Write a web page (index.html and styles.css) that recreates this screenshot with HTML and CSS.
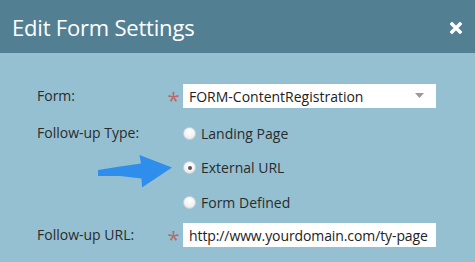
FILE: index.html
```html
<!DOCTYPE html>
<html lang="en">
<head>
    <meta charset="UTF-8">
    <title>Edit Form Settings</title>
    <link rel="stylesheet" href="styles.css">
</head>
<body>
    <div class="dialog">
        <div class="dialog-header">
            <h1>Edit Form Settings</h1>
            <span class="close-btn">
                <svg width="12" height="12" viewBox="0 0 12 12">
                    <path d="M2 2 L10 10 M10 2 L2 10" stroke="#fff" stroke-width="3.4" stroke-linecap="square"/>
                </svg>
            </span>
        </div>

        <div class="dialog-body">
            <div class="form-row">
                <label>Form:</label>
                <span class="required">*</span>
                <div class="select">
                    <span>FORM-ContentRegistration</span>
                    <svg class="caret" width="9" height="5" viewBox="0 0 9 5">
                        <polygon points="0,0 9,0 4.5,5" fill="#9a9a9a"/>
                    </svg>
                </div>
            </div>

            <div class="form-row row-type">
                <label>Follow-up Type:</label>
                <span></span>
                <div class="radio-group">
                    <div class="radio-item"><span class="radio"></span>Landing Page</div>
                    <div class="radio-item"><span class="radio checked"></span>External URL</div>
                    <div class="radio-item"><span class="radio"></span>Form Defined</div>
                </div>
            </div>

            <div class="form-row row-url">
                <label>Follow-up URL:</label>
                <span class="required">*</span>
                <div class="text-input">http://www.yourdomain.com/ty-page</div>
            </div>
        </div>

        <!-- callout arrow pointing at the selected option -->
        <svg class="callout-arrow" width="80" height="40" viewBox="95 150 80 40">
            <polygon points="98,170 120,166.5 141,163.5 139.5,155 172,167.5 142,187.5 141.5,178.5 120,176 98,176" fill="#2f8eec"/>
        </svg>
    </div>
</body>
</html>
```

FILE: styles.css
```css
body {
    margin: 0;
    font-family: 'Open Sans', 'Liberation Sans', sans-serif;
}
.dialog {
    position: relative;
    width: 475px;
    height: 262px;
    background-color: #95c0d1;
    overflow: hidden;
}
.dialog-header {
    height: 53px;
    background-color: #537f93;
    display: flex;
    align-items: center;
    justify-content: space-between;
    padding: 0 13px 0 12px;
}
.dialog-header h1 {
    margin: 0;
    color: #fff;
    font-size: 22px;
    font-weight: normal;
    letter-spacing: -0.2px;
}
.close-btn {
    display: flex;
    margin-top: 2px;
}
.dialog-body {
    padding: 31px 0 0 37px;
    display: flex;
    flex-direction: column;
}
.form-row {
    display: grid;
    grid-template-columns: 128px 18px 253px;
    align-items: start;
    font-size: 14px;
    color: #2b2b2b;
}
.form-row label {
    line-height: 24px;
}
.row-type {
    margin-top: 13px;
}
.row-url {
    margin-top: 9px;
}
.required {
    color: #b56b6b;
    font-size: 22px;
    line-height: 30px;
    height: 24px;
    text-align: center;
    margin-left: -1px;
}
.select,
.text-input {
    height: 24px;
    background-color: #fff;
    display: flex;
    align-items: center;
    justify-content: space-between;
    padding: 0 8px 0 6px;
    color: #222;
    white-space: nowrap;
    overflow: hidden;
}
.text-input {
    padding-right: 2px;
    letter-spacing: -0.1px;
}
.caret {
    margin-right: 4px;
    margin-top: -1px;
}
.radio-group {
    display: flex;
    flex-direction: column;
    gap: 10.5px;
}
.radio-item {
    display: flex;
    align-items: center;
    height: 24px;
    gap: 5px;
}
.radio {
    width: 13px;
    height: 13px;
    border-radius: 50%;
    box-sizing: border-box;
    border: 1px solid #c9d4d9;
    background: radial-gradient(circle at 50% 35%, #ffffff 0%, #f3f3f3 55%, #dcdcdc 100%);
    position: relative;
}
.radio.checked::after {
    content: "";
    position: absolute;
    left: 3.5px;
    top: 3.5px;
    width: 4px;
    height: 4px;
    border-radius: 50%;
    background-color: #555;
}
.callout-arrow {
    position: absolute;
    left: 95px;
    top: 150px;
}
```
